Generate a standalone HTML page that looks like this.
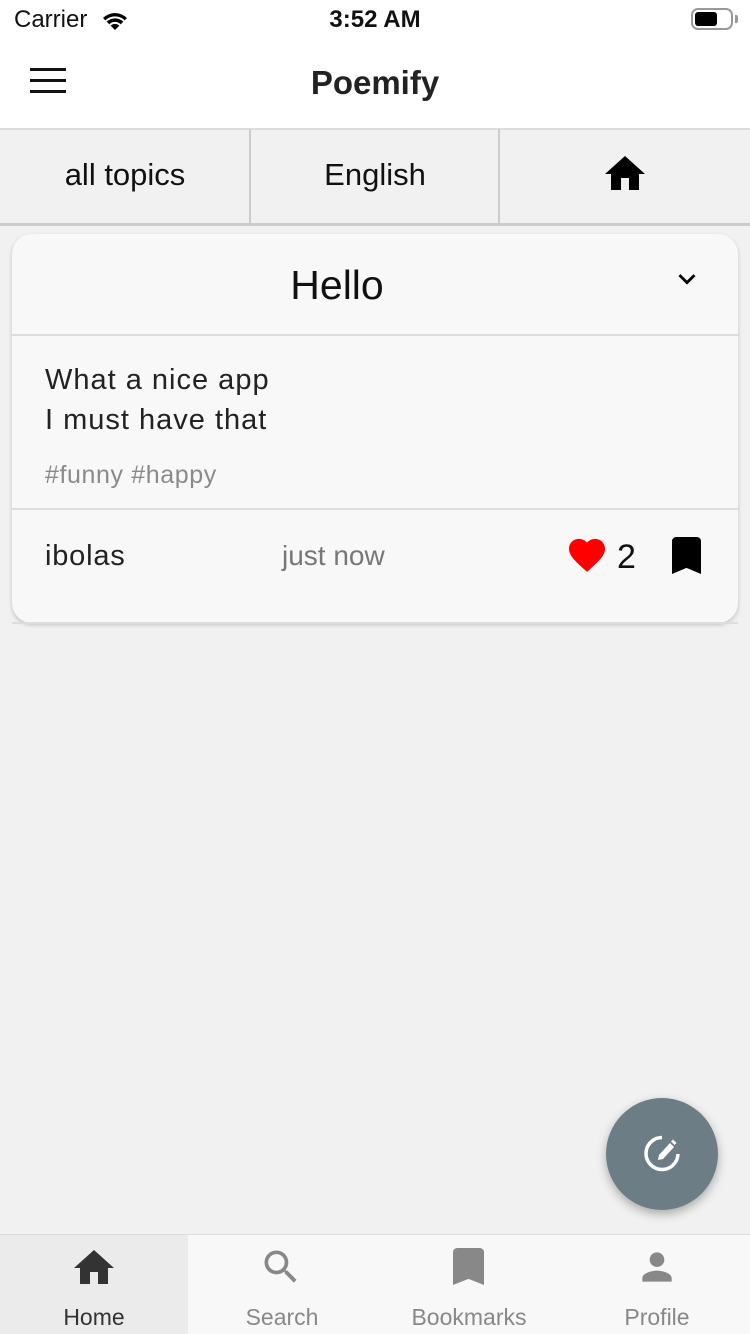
<!DOCTYPE html>
<html><head><meta charset="utf-8"><style>
*{margin:0;padding:0;box-sizing:border-box}
body{width:750px;height:1334px;background:#f1f1f1;font-family:"Liberation Sans",sans-serif;position:relative;overflow:hidden;color:#111}
.abs{position:absolute}
</style></head><body>
<div class="abs" style="left:0;top:0;width:750px;height:128px;background:#fff"></div>
<div class="abs" style="left:14px;top:6px;font-size:24px">Carrier</div>
<svg class="abs" style="left:100px;top:8px" width="30" height="24" viewBox="0 0 30 24"><path d="M15 22 L3 10 A17 17 0 0 1 27 10 Z" fill="#000"/><path d="M6 13 A13 13 0 0 1 24 13" stroke="#fff" stroke-width="2" fill="none"/><path d="M10 17 A7 7 0 0 1 20 17" stroke="#fff" stroke-width="2" fill="none"/></svg>
<div class="abs" style="left:0;width:750px;top:6px;text-align:center;font-size:24px;font-weight:bold">3:52 AM</div>
<div class="abs" style="left:691px;top:8px;width:42px;height:22px;border:2px solid #999;border-radius:7px"></div>
<div class="abs" style="left:695px;top:12px;width:22px;height:14px;background:#000;border-radius:3px"></div>
<div class="abs" style="left:735px;top:15px;width:3px;height:8px;background:#999;border-radius:0 2px 2px 0"></div>
<div class="abs" style="left:30px;top:68px;width:36px;height:3px;background:#111"></div>
<div class="abs" style="left:30px;top:79px;width:36px;height:3px;background:#111"></div>
<div class="abs" style="left:30px;top:90px;width:36px;height:3px;background:#111"></div>
<div class="abs" style="left:0;width:750px;top:64px;text-align:center;font-size:33px;font-weight:bold;color:#222">Poemify</div>
<div class="abs" style="left:0;top:128px;width:750px;height:2px;background:#ddd"></div>
<div class="abs" style="left:0;top:223px;width:750px;height:3px;background:#ccc"></div>
<div class="abs" style="left:249px;top:129px;width:2px;height:95px;background:#ccc"></div>
<div class="abs" style="left:498px;top:129px;width:2px;height:95px;background:#ccc"></div>
<div class="abs" style="left:0;width:250px;top:157px;text-align:center;font-size:31px">all topics</div>
<div class="abs" style="left:250px;width:250px;top:157px;text-align:center;font-size:31px">English</div>
<svg class="abs" style="left:605px;top:154px" width="40" height="40" viewBox="2 3 20 18"><path d="M10 20v-6h4v6h5v-8h3L12 3 2 12h3v8z"/></svg>
<div class="abs" style="left:12px;top:234px;width:726px;height:389px;background:#f8f8f8;border-radius:20px;box-shadow:0 2px 4px rgba(0,0,0,.2)"></div>
<div class="abs" style="left:12px;top:622px;width:726px;height:2px;background:#ddd"></div>
<div class="abs" style="left:12px;width:650px;top:262px;text-align:center;font-size:41px">Hello</div>
<svg class="abs" style="left:670px;top:262px" width="34" height="34" viewBox="0 0 24 24"><path d="M7.41 8.59L12 13.17l4.59-4.58L18 10l-6 6-6-6z"/></svg>
<div class="abs" style="left:12px;top:334px;width:726px;height:2px;background:#ddd"></div>
<div class="abs" style="left:45px;top:360px;font-size:29px;line-height:40px;color:#222;letter-spacing:1px">What a nice app<br>I must have that</div>
<div class="abs" style="left:45px;top:461px;font-size:25px;color:#8a8a8a;letter-spacing:0.6px">#funny #happy</div>
<div class="abs" style="left:12px;top:508px;width:726px;height:2px;background:#ddd"></div>
<div class="abs" style="left:45px;top:540px;font-size:29px;color:#222;letter-spacing:0.8px">ibolas</div>
<div class="abs" style="left:282px;top:540px;font-size:28px;color:#777">just now</div>
<svg class="abs" style="left:569px;top:538px" width="36" height="36" viewBox="2 3 20 19"><path fill="#f00" d="M12 21.35l-1.45-1.32C5.4 15.36 2 12.28 2 8.5 2 5.42 4.42 3 7.5 3c1.74 0 3.41.81 4.5 2.09C13.09 3.81 14.76 3 16.5 3 19.58 3 22 5.42 22 8.5c0 3.78-3.4 6.86-8.55 11.54L12 21.35z"/></svg>
<div class="abs" style="left:617px;top:538px;font-size:34px">2</div>
<svg class="abs" style="left:672px;top:537px" width="29" height="37" viewBox="5 3 14 18" preserveAspectRatio="none"><path d="M17 3H7c-1.1 0-2 .9-2 2v16l7-3 7 3V5c0-1.1-.9-2-2-2z"/></svg>
<div class="abs" style="left:606px;top:1098px;width:112px;height:112px;border-radius:50%;background:#6c7d86;box-shadow:0 4px 10px rgba(0,0,0,.3)"></div>
<svg class="abs" style="left:638px;top:1130px" width="48" height="48" viewBox="0 0 48 48"><path d="M24 7.5 A16 16 0 1 0 40 24" stroke="#fff" stroke-width="3.5" fill="none"/><path d="M20 30 L21 25 L32 13 L36 17 L25 29 Z" fill="#fff"/><path d="M33 11.5 L35 9.5 L38.5 13 L36.5 15 Z" fill="#fff"/></svg>
<div class="abs" style="left:0;top:1234px;width:750px;height:100px;background:#f8f8f8;border-top:1px solid #ddd"></div>
<div class="abs" style="left:0;top:1235px;width:188px;height:99px;background:#ebebeb"></div>
<svg class="abs" style="left:74px;top:1248px" width="40" height="40" viewBox="2 3 20 18"><path fill="#333" d="M10 20v-6h4v6h5v-8h3L12 3 2 12h3v8z"/></svg>
<svg class="abs" style="left:259px;top:1245px" width="44" height="44" viewBox="0 0 24 24"><path fill="#888" d="M15.5 14h-.79l-.28-.27A6.47 6.47 0 0 0 16 9.5 6.5 6.5 0 1 0 9.5 16c1.61 0 3.09-.59 4.23-1.57l.27.28v.79l5 4.99L20.49 19l-4.99-5zm-6 0C7.01 14 5 11.99 5 9.5S7.01 5 9.5 5 14 7.01 14 9.5 11.99 14 9.5 14z"/></svg>
<svg class="abs" style="left:453px;top:1248px" width="31" height="37" viewBox="5 3 14 18" preserveAspectRatio="none"><path fill="#888" d="M17 3H7c-1.1 0-2 .9-2 2v16l7-3 7 3V5c0-1.1-.9-2-2-2z"/></svg>
<svg class="abs" style="left:635px;top:1245px" width="44" height="44" viewBox="0 0 24 24"><path fill="#888" d="M12 12c2.21 0 4-1.79 4-4s-1.79-4-4-4-4 1.79-4 4 1.79 4 4 4zm0 2c-2.67 0-8 1.34-8 4v2h16v-2c0-2.66-5.33-4-8-4z"/></svg>
<div class="abs" style="left:0;width:188px;top:1304px;text-align:center;font-size:23px;color:#333">Home</div>
<div class="abs" style="left:188px;width:188px;top:1304px;text-align:center;font-size:23px;color:#888">Search</div>
<div class="abs" style="left:375px;width:188px;top:1304px;text-align:center;font-size:23px;color:#888">Bookmarks</div>
<div class="abs" style="left:563px;width:188px;top:1304px;text-align:center;font-size:23px;color:#888">Profile</div>
</body></html>
